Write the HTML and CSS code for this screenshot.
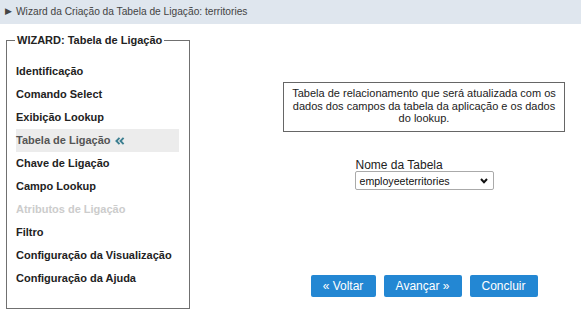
FILE: index.html
```html
<!DOCTYPE html>
<html lang="pt">
<head>
<meta charset="utf-8">
<title>Wizard</title>
<link rel="stylesheet" href="styles.css">
</head>
<body>
<div class="header"><span class="tri">&#9654;</span>Wizard da Criação da Tabela de Ligação: territories</div>
<div class="main">
  <fieldset class="wizard">
    <legend>WIZARD: Tabela de Ligação</legend>
    <ul class="steps">
      <li>Identificação</li>
      <li>Comando Select</li>
      <li>Exibição Lookup</li>
      <li class="active">Tabela de Ligação <svg class="arr" width="10" height="8" viewBox="0 0 10 8"><path d="M4.5 0.8 L1.4 4 L4.5 7.2 M8.6 0.8 L5.5 4 L8.6 7.2" fill="none" stroke="#3d7f91" stroke-width="1.9"/></svg></li>
      <li>Chave de Ligação</li>
      <li>Campo Lookup</li>
      <li class="disabled">Atributos de Ligação</li>
      <li>Filtro</li>
      <li>Configuração da Visualização</li>
      <li>Configuração da Ajuda</li>
    </ul>
  </fieldset>
  <div class="content">
    <div class="desc">Tabela de relacionamento que será atualizada com os dados dos campos da tabela da aplicação e os dados do lookup.</div>
    <div class="field">
      <label class="lbl" for="tb">Nome da Tabela</label>
      <div class="select" id="tb"><span>employeeterritories</span>
        <svg class="chev" width="8" height="6" viewBox="0 0 8 6"><path d="M1 1 L4 4.2 L7 1" fill="none" stroke="#111" stroke-width="2"/></svg>
      </div>
    </div>
    <div class="buttons">
      <button class="btn">&laquo; Voltar</button>
      <button class="btn">Avançar &raquo;</button>
      <button class="btn">Concluir</button>
    </div>
  </div>
</div>
</body>
</html>
```

FILE: styles.css
```css
html, body { margin: 0; padding: 0; background: #fff; }
body { font-family: "Liberation Sans", Arial, sans-serif; color: #222; width: 581px; height: 317px; overflow: hidden; }
.header {
  height: 24px; line-height: 24px; background: #dfe6ee; color: #444; font-size: 10.2px;
  padding-left: 5px; box-sizing: border-box;
}
.tri { font-size: 9px; color: #444; margin-right: 4px; position: relative; top: -1px; }
.main { display: flex; padding-top: 9px; }
.wizard {
  margin: 0 0 0 6px; padding: 0 9px 18px 9px; width: 184px; box-sizing: border-box;
  border: 1px solid #707070; height: 276px;
}
.wizard legend { font-weight: bold; font-size: 11px; padding: 0 2px; margin-left: -1px; color: #222; line-height: 14px; }
.steps { list-style: none; margin: 13px 0 0 0; padding: 0; width: 163px; }
.steps li { height: 23px; line-height: 23px; font-size: 11px; font-weight: bold; color: #222; white-space: nowrap; }
.steps li.active { background: #ececec; color: #555; }
.steps li.disabled { color: #ccc; }
.arr { vertical-align: -0.5px; margin-left: 1px; }
.content { flex: 1; margin-left: 77px; display: flex; flex-direction: column; align-items: center; }
.desc {
  margin-top: 49px; width: 282px; height: 50px; box-sizing: border-box; border: 1px solid #666;
  font-size: 11px; line-height: 12.5px; text-align: center; color: #222; padding: 4px 8px 0;
}
.field { margin-top: 26px; display: flex; flex-direction: column; width: 139px; }
.lbl { font-size: 12px; color: #222; line-height: 14px; padding-left: 1px; }
.select {
  margin-top: -1px; height: 19px; box-sizing: border-box; border: 1px solid #aaa; border-radius: 2px;
  display: flex; align-items: center; justify-content: space-between; padding: 0 5px 0 4px;
  font-size: 10.6px; color: #111;
}
.chev { display: block; }
.buttons { margin-top: 85px; display: flex; gap: 8px; }
.btn {
  height: 22px; padding: 0 12px; border: none; border-radius: 2px; background: #2387d3; color: #fff;
  font-family: "Liberation Sans", Arial, sans-serif; font-size: 12px; line-height: 22px; cursor: pointer;
}
.btn:nth-child(1) { width: 65px; }
.btn:nth-child(2) { width: 78px; }
.btn:nth-child(3) { width: 68px; }
```
